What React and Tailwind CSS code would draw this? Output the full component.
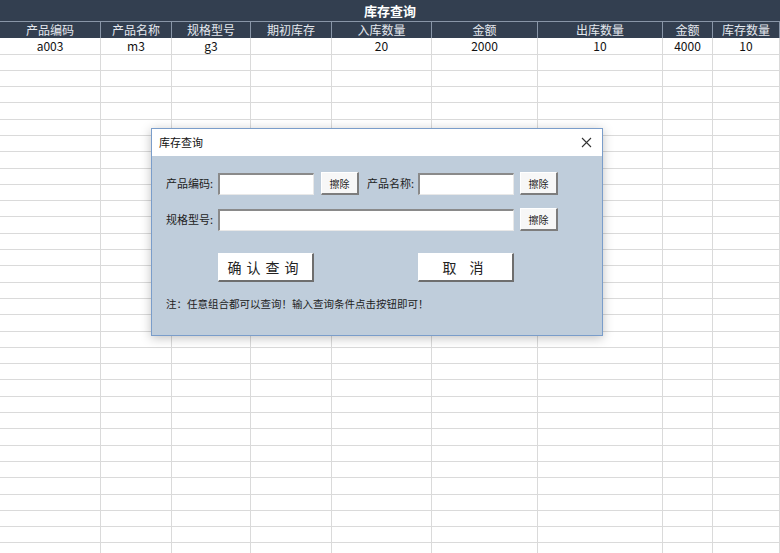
import React from 'react';

const cols = [
  { name: '产品编码', w: 101, v: 'a003' },
  { name: '产品名称', w: 71, v: 'm3' },
  { name: '规格型号', w: 79, v: 'g3' },
  { name: '期初库存', w: 81, v: '' },
  { name: '入库数量', w: 100, v: '20' },
  { name: '金额', w: 106, v: '2000' },
  { name: '出库数量', w: 125, v: '10' },
  { name: '金额', w: 50, v: '4000' },
  { name: '库存数量', w: 67, v: '10' },
];

const gridCols = cols.map((c) => `${c.w}px`).join(' ');
const font = { fontFamily: '"Noto Sans CJK SC", "Noto Sans", sans-serif' };

const Input = ({ className }) => (
  <div
    className={`h-[22px] bg-white border-t-2 border-l-2 border-t-[#8a8a8a] border-l-[#8a8a8a] border-b border-r border-b-[#e8e8e8] border-r-[#e8e8e8] ${className}`}
  />
);

const SmallBtn = () => (
  <button className="w-[38px] h-[23px] bg-[#f7f7f7] border-t border-l border-t-white border-l-white border-b-2 border-r-2 border-b-[#7d7d7d] border-r-[#7d7d7d] text-[10px] text-[#222] leading-none flex items-center justify-center pt-[2px]">
    擦除
  </button>
);

const BigBtn = ({ children }) => (
  <button className="w-[96px] h-[29px] bg-white border-t border-l border-t-white border-l-white border-b-2 border-r-2 border-b-[#6e6e6e] border-r-[#6e6e6e] text-[14px] text-[#222] tracking-[5px] flex items-center justify-center">
    {children}
  </button>
);

const QueryDialog = () => (
  <div className="absolute left-[151px] top-[128px] w-[452px] h-[208px] border border-[#7a9dca] bg-[#bfcddb] shadow-[0_2px_10px_rgba(0,0,0,0.25)] flex flex-col" style={font}>
    <div className="h-[27px] bg-white flex items-center justify-between pl-[7px] pr-[10px] shrink-0">
      <span className="text-[11px] text-[#111]">库存查询</span>
      <svg width="11" height="11" viewBox="0 0 11 11" className="text-[#333]">
        <path d="M1 1L10 10M10 1L1 10" stroke="currentColor" strokeWidth="1.1" />
      </svg>
    </div>
    <div className="flex flex-col pl-[14px] pt-[16px] text-[11px] text-[#222]">
      <div className="flex items-center h-[23px]">
        <span className="w-[52px]">产品编码:</span>
        <Input className="w-[96px]" />
        <div className="ml-[7px]"><SmallBtn /></div>
        <span className="ml-[8px] w-[51px]">产品名称:</span>
        <Input className="w-[96px]" />
        <div className="ml-[6px]"><SmallBtn /></div>
      </div>
      <div className="flex items-center h-[23px] mt-[13px]">
        <span className="w-[52px]">规格型号:</span>
        <Input className="w-[296px]" />
        <div className="ml-[6px]"><SmallBtn /></div>
      </div>
      <div className="flex items-center mt-[22px] pl-[52px] gap-[104px]">
        <BigBtn>确认查询</BigBtn>
        <BigBtn>取 消</BigBtn>
      </div>
      <div className="mt-[14px] text-[10.5px]">注：任意组合都可以查询！输入查询条件点击按钮即可！</div>
    </div>
  </div>
);

export default function App() {
  const rows = Array.from({ length: 31 });
  return (
    <div className="relative w-[780px] h-[553px] overflow-hidden bg-white" style={font}>
      <div className="h-[22px] bg-[#333f50] border-b border-[#8996a8] flex items-center justify-center">
        <span className="text-[13px] font-bold text-white">库存查询</span>
      </div>
      <div className="grid h-[16px] bg-[#333f50]" style={{ gridTemplateColumns: gridCols }}>
        {cols.map((c, i) => (
          <div key={i} className="border-r border-[#8996a8] text-[12px] leading-[16px] text-[#e4e8ee] text-center overflow-hidden">
            {c.name}
          </div>
        ))}
      </div>
      <div className="grid" style={{ gridTemplateColumns: gridCols }}>
        {cols.map((c, i) => (
          <div key={i} className="h-[16.5px] border-r border-b border-[#dadada] text-[12px] leading-[16px] text-[#111] text-center">
            {c.v}
          </div>
        ))}
        {rows.map((_, r) =>
          cols.map((c, i) => (
            <div key={`${r}-${i}`} className="h-[16.3px] border-r border-b border-[#dadada]" />
          ))
        )}
      </div>
      <QueryDialog />
    </div>
  );
}
